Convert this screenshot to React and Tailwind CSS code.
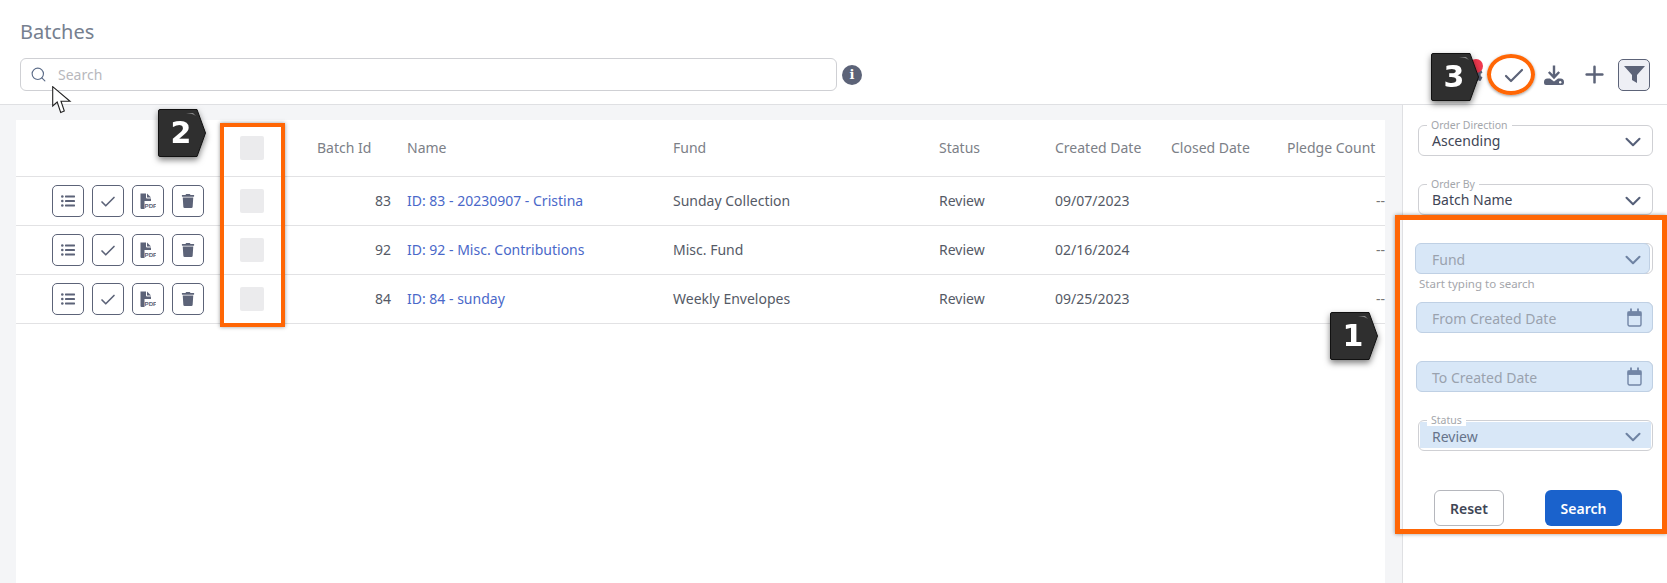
import React from "react";
import { Search, ChevronDown, Check, Plus } from "lucide-react";
import { FaCog, FaTrash } from "react-icons/fa";

const cols = "grid grid-cols-[212px_89px_90px_266px_266px_116px_116px_116px_98px] items-center border-b border-[#e2e2e4]";

const rows = [
  { id: 83, name: "ID: 83 - 20230907 - Cristina", fund: "Sunday Collection", date: "09/07/2023" },
  { id: 92, name: "ID: 92 - Misc. Contributions", fund: "Misc. Fund", date: "02/16/2024" },
  { id: 84, name: "ID: 84 - sunday", fund: "Weekly Envelopes", date: "09/25/2023" },
];

function ListIcon() {
  return (
    <svg width="14" height="12" viewBox="0 0 14 12" fill="#5c6378">
      <circle cx="1.3" cy="1.5" r="1.3" />
      <circle cx="1.3" cy="6" r="1.3" />
      <circle cx="1.3" cy="10.5" r="1.3" />
      <rect x="4" y="0.6" width="10" height="1.8" rx="0.4" />
      <rect x="4" y="5.1" width="10" height="1.8" rx="0.4" />
      <rect x="4" y="9.6" width="10" height="1.8" rx="0.4" />
    </svg>
  );
}

function PdfIcon() {
  return (
    <svg width="16" height="17" viewBox="0 0 16 17">
      <path d="M0.5 0.5H6V4.5Q6 5.5 7 5.5H11V8H4.5V16H1.5Q0.5 16 0.5 15Z" fill="#5c6378" />
      <path d="M7 0.5L11 4.5H7Z" fill="#5c6378" />
      <text x="4.5" y="15" fontSize="6.2" fontWeight="700" fill="#5c6378" fontFamily="'Liberation Sans', sans-serif">PDF</text>
    </svg>
  );
}

function CalendarIcon() {
  return (
    <svg width="15" height="19" viewBox="0 0 15 19" fill="none" stroke="#7386a6" className="mr-[4px]">
      <rect x="1" y="4" width="13" height="14" rx="1.5" strokeWidth="1.4" />
      <rect x="1" y="4" width="13" height="3.4" fill="#7386a6" strokeWidth="1" />
      <path d="M4 0.5V4M11 0.5V4" strokeWidth="1.8" />
    </svg>
  );
}

function DownloadIcon() {
  return (
    <svg width="20" height="20" viewBox="0 0 20 20">
      <path d="M10 0.5V12M4.8 7L10 12.4L15.2 7" fill="none" stroke="#5c6378" strokeWidth="2.4" />
      <path d="M0 17Q0 13.5 3.5 13.5H6L10 16.4L14 13.5H16.5Q20 13.5 20 17V18Q20 20 18 20H2Q0 20 0 18Z" fill="#5c6378" />
      <circle cx="16.2" cy="17.2" r="1.2" fill="#fff" />
    </svg>
  );
}

function FunnelIcon() {
  return (
    <svg width="21" height="17" viewBox="0 0 21 17" fill="#5c6378">
      <path d="M0 0H21L13 9V17L8 14V9Z" />
    </svg>
  );
}

function Badge({ n, className }) {
  return (
    <div className={`absolute w-12 h-12 drop-shadow-[0_3px_3px_rgba(0,0,0,0.5)] flex items-center justify-center ${className}`}>
      <svg width="48" height="48" viewBox="0 0 48 48" className="absolute inset-0">
        <path d="M2 0.5H39L47.5 24L39 47.5H2Q0.5 47.5 0.5 46V2Q0.5 0.5 2 0.5Z" fill="#2f2f2f" stroke="#111" />
        <path d="M28 4H35L38 7Q35 4.6 28 4Z" fill="#888" />
      </svg>
      <span className="relative pr-[2px] text-white text-[30px] font-black leading-none font-['DejaVu_Sans',sans-serif]">{n}</span>
    </div>
  );
}

function Field({ label, value, placeholder, icon, highlight, helper }) {
  const muted = placeholder || value === "Review";
  return (
    <div className="h-[59px]">
      <div className="relative h-[31px] rounded-md border border-[#cfd0d4] flex items-center justify-between pl-[13px] pr-[6px] bg-white">
        {highlight}
        {label && (
          <span className="absolute -top-[7px] left-[8px] bg-white px-[4px] text-[10.5px] leading-[12px] text-[#a3a6ab]">{label}</span>
        )}
        <span className={`relative text-[14px] ${muted ? "pt-[2px]" : ""} ${placeholder ? "text-[#9aa2ae]" : muted ? "text-[#66738a]" : "text-[#3f4656]"}`}>
          {value || placeholder}
        </span>
        <span className="relative flex items-center">
          {icon || (
            <ChevronDown size={26} strokeWidth={1.9} className={`mt-[2px] ${muted ? "text-[#6f83a3]" : "text-[#566079]"}`} />
          )}
        </span>
      </div>
      {helper && <div className="pt-[2px] pl-[1px] text-[11.5px] leading-[16px] text-[#a4a6ab]">{helper}</div>}
    </div>
  );
}

const rowBtn = "w-8 h-8 rounded-[5px] border border-[#5c6378] flex items-center justify-center text-[#5c6378]";

export default function App() {
  return (
    <div className="relative h-[583px] overflow-hidden bg-white font-['Noto_Sans',sans-serif]">
      <header className="h-[105px] border-b border-[#dfe0e3] pl-5 pr-[17px] pt-[18px]">
        <h1 className="text-[20px] leading-[28px] text-[#76808f]">Batches</h1>
        <div className="mt-[12px] flex items-center">
          <div className="w-[817px] h-[33px] rounded-md border border-[#cfd0d4] flex items-center pl-[9px] gap-[11px]">
            <Search size={17} strokeWidth={1.6} className="text-[#5c6c88]" />
            <span className="text-[14px] text-[#b8b8bd]">Search</span>
          </div>
          <div className="ml-[5px] w-5 h-5 rounded-full bg-[#5c6378] flex items-center justify-center text-white text-[13px] font-bold font-['DejaVu_Serif',serif] leading-none">i</div>
          <div className="ml-auto flex items-center">
            <div className="relative w-10 h-8 flex items-center justify-center text-[#5c6378]">
              <FaCog size={18} />
              <span className="absolute top-0 left-[15px] w-[14px] h-[14px] rounded-full bg-[#f0394f]" />
            </div>
            <div className="w-10 h-8 flex items-center justify-center text-[#5c6378]">
              <Check size={24} strokeWidth={2.2} className="mt-[2px]" />
            </div>
            <div className="w-10 h-8 flex items-center justify-center">
              <DownloadIcon />
            </div>
            <div className="w-10 h-8 flex items-center justify-center text-[#5c6378]">
              <Plus size={27} strokeWidth={2.2} />
            </div>
            <div className="ml-1 w-8 h-8 rounded-[5px] border border-[#5c6378] bg-[#eeeff5] flex items-center justify-center">
              <FunnelIcon />
            </div>
          </div>
        </div>
      </header>

      <main className="flex h-[478px]">
        <section className="w-[1403px] shrink-0 bg-[#f4f5f7] border-r border-[#dfe0e3] pl-4 pr-[17px] pt-[15px]">
          <div className="h-full bg-white">
            <div className={`${cols} h-[57px] text-[14px] text-[#7c8087]`}>
              <div />
              <div className="pl-3"><div className="w-6 h-6 rounded-[2px] bg-[#ebebed]" /></div>
              <div className="pb-[2px]">Batch Id</div>
              <div className="pb-[2px]">Name</div>
              <div className="pb-[2px]">Fund</div>
              <div className="pb-[2px]">Status</div>
              <div className="pb-[2px]">Created Date</div>
              <div className="pb-[2px]">Closed Date</div>
              <div className="pb-[2px]">Pledge Count</div>
            </div>
            {rows.map((r) => (
              <div key={r.id} className={`${cols} h-[49px] text-[14px] text-[#555a66]`}>
                <div className="pl-9 flex gap-2">
                  <button className={rowBtn}><ListIcon /></button>
                  <button className={rowBtn}><Check size={18} strokeWidth={2.2} className="mt-[2px]" /></button>
                  <button className={rowBtn}><PdfIcon /></button>
                  <button className={rowBtn}><FaTrash size={14} /></button>
                </div>
                <div className="pl-3"><div className="w-6 h-6 rounded-[2px] bg-[#ebebed]" /></div>
                <div className="text-right pr-4 pb-[2px]">{r.id}</div>
                <div className="pb-[2px] text-[#4a68c9]">{r.name}</div>
                <div className="pb-[2px]">{r.fund}</div>
                <div className="pb-[2px]">Review</div>
                <div className="pb-[2px]">{r.date}</div>
                <div />
                <div className="pb-[2px] text-right text-[#777]">--</div>
              </div>
            ))}
          </div>
        </section>

        <aside className="flex-1 pt-5 pl-[15px] pr-[14px]">
          <Field label="Order Direction" value="Ascending" />
          <Field label="Order By" value="Batch Name" />
          <Field
            placeholder="Fund"
            helper="Start typing to search"
            highlight={<span className="absolute -left-[4px] right-[2px] -top-px -bottom-px rounded-md bg-[#d8e7f7] border border-[#bfd0e4]" />}
          />
          <Field
            placeholder="From Created Date"
            icon={<CalendarIcon />}
            highlight={<span className="absolute -left-[3px] -right-px -top-px -bottom-px rounded-md bg-[#d8e7f7] border border-[#bfd0e4]" />}
          />
          <Field
            placeholder="To Created Date"
            icon={<CalendarIcon />}
            highlight={<span className="absolute -left-[3px] -right-px -top-px -bottom-px rounded-md bg-[#d8e7f7] border border-[#bfd0e4]" />}
          />
          <Field
            label="Status"
            value="Review"
            highlight={<span className="absolute left-px right-px top-px bottom-[2px] bg-[#d8e7f7]" />}
          />
          <div className="mt-[11px] flex pl-4 gap-[41px]">
            <button className="w-[70px] h-9 rounded-md border border-[#b5b7bd] text-[14px] font-semibold text-[#3f4656]">Reset</button>
            <button className="w-[77px] h-9 rounded-md bg-[#1a62cc] text-[14px] font-semibold text-white">Search</button>
          </div>
        </aside>
      </main>

      {/* annotations lying over the page */}
      <div className="absolute left-[220px] top-[123px] w-[65px] h-[204px] border-4 border-[#ff6605] shadow-[0_0_4px_rgba(0,0,0,0.4)]" />
      <div className="absolute left-[1395px] top-[215px] w-[272px] h-[319px] border-[5px] border-[#ff6605] shadow-[0_0_4px_rgba(0,0,0,0.4)]" />
      <div className="absolute left-[1487px] top-[54px] w-[48px] h-[41px] rounded-[50%] border-[4px] border-[#ff6605] shadow-[0_1px_3px_rgba(0,0,0,0.4)]" />
      <Badge n="2" className="left-[158px] top-[109px]" />
      <Badge n="1" className="left-[1330px] top-[312px]" />
      <Badge n="3" className="left-[1431px] top-[53px]" />
      <svg className="absolute left-[52px] top-[86px]" width="20" height="28" viewBox="0 0 20 28">
        <path d="M0.7 0.7V20L5.2 16L8.7 26.5L12.3 25L9 15.3H18Z" fill="#fff" stroke="#222" strokeWidth="1.1" />
      </svg>
    </div>
  );
}
